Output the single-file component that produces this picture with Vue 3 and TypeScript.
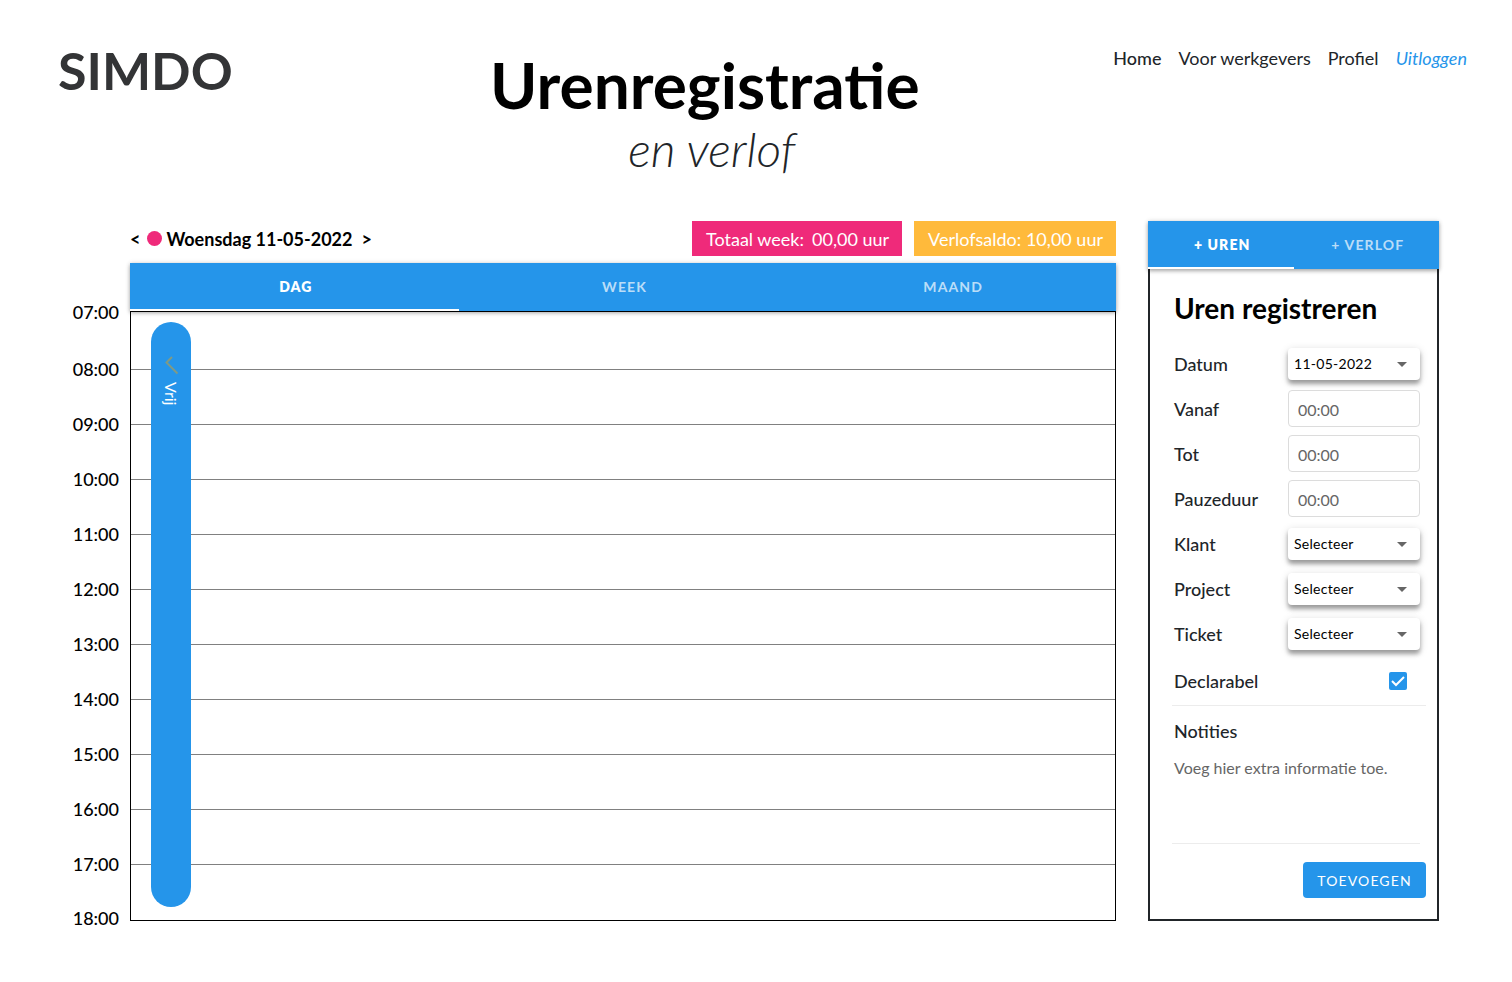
<script setup lang="ts">
import { ref } from 'vue'

interface SelectField {
  kind: 'select'
  id: string
  label: string
  value: string
}
interface TimeField {
  kind: 'time'
  id: string
  label: string
  value: string
}
type Field = SelectField | TimeField

const hours: string[] = Array.from({ length: 12 }, (_, i) => `${String(i + 7).padStart(2, '0')}:00`)
const views = ['DAG', 'WEEK', 'MAAND'] as const
const activeView = ref<string>('DAG')

const forms = ['+ UREN', '+ VERLOF'] as const
const activeForm = ref<string>('+ UREN')

const fields = ref<Field[]>([
  { kind: 'select', id: 'datum', label: 'Datum', value: '11-05-2022' },
  { kind: 'time', id: 'vanaf', label: 'Vanaf', value: '' },
  { kind: 'time', id: 'tot', label: 'Tot', value: '' },
  { kind: 'time', id: 'pauzeduur', label: 'Pauzeduur', value: '' },
  { kind: 'select', id: 'klant', label: 'Klant', value: 'Selecteer' },
  { kind: 'select', id: 'project', label: 'Project', value: 'Selecteer' },
  { kind: 'select', id: 'ticket', label: 'Ticket', value: 'Selecteer' },
])
const billable = ref(true)
const notes = ref('')
</script>

<template>
  <div class="page">
    <header class="header">
      <div class="logo">SIMDO</div>
      <div class="heading">
        <h1>Urenregistratie</h1>
        <p>en verlof</p>
      </div>
      <nav class="nav">
        <a href="#home" class="current">Home</a>
        <a href="#werkgevers">Voor werkgevers</a>
        <a href="#profiel">Profiel</a>
        <a href="#uitloggen" class="logout">Uitloggen</a>
      </nav>
    </header>

    <main class="main">
      <section class="agenda">
        <div class="toolbar">
          <div class="day">
            <button type="button" aria-label="Vorige dag">&lt;</button>
            <span class="dot"></span>
            <strong>Woensdag 11-05-2022</strong>
            <button type="button" class="next" aria-label="Volgende dag">&gt;</button>
          </div>
          <div class="totals">
            <div class="total pink"><span>Totaal week:</span><span>00,00 uur</span></div>
            <div class="total amber">Verlofsaldo: 10,00 uur</div>
          </div>
        </div>

        <ol class="hours">
          <li v-for="hour in hours" :key="hour">{{ hour }}</li>
        </ol>

        <div class="calendar">
          <div class="tabs" role="tablist">
            <button
              v-for="view in views"
              :key="view"
              type="button"
              role="tab"
              :aria-selected="activeView === view"
              :class="{ active: activeView === view }"
              @click="activeView = view"
            >{{ view }}</button>
          </div>
          <div class="slots">
            <div v-for="hour in hours.slice(1)" :key="hour" class="slot"></div>
            <div class="event">
              <svg width="16" height="20" viewBox="0 0 16 20" fill="none" aria-hidden="true">
                <path d="M9 2 L3.5 7.5 L14.5 18.5" stroke="#7f9a85" stroke-width="2" />
              </svg>
              <span>Vrij</span>
            </div>
          </div>
        </div>
      </section>

      <aside class="panel">
        <div class="tabs" role="tablist">
          <button
            v-for="form in forms"
            :key="form"
            type="button"
            role="tab"
            :aria-selected="activeForm === form"
            :class="{ active: activeForm === form }"
            @click="activeForm = form"
          >{{ form }}</button>
        </div>
        <form class="form" @submit.prevent>
          <h2>Uren registreren</h2>
          <div v-for="field in fields" :key="field.id" class="field">
            <label :for="field.id">{{ field.label }}</label>
            <div v-if="field.kind === 'select'" class="select">
              <select :id="field.id" v-model="field.value">
                <option>{{ field.value }}</option>
              </select>
              <svg width="10" height="5" viewBox="0 0 10 5" aria-hidden="true">
                <path d="M0 0 H10 L5 5 Z" fill="#666" />
              </svg>
            </div>
            <input v-else :id="field.id" v-model="field.value" type="text" placeholder="00:00" />
          </div>
          <div class="field check">
            <label for="declarabel">Declarabel</label>
            <span class="box">
              <input id="declarabel" v-model="billable" type="checkbox" />
              <svg v-if="billable" width="18" height="18" viewBox="0 0 18 18" fill="none" aria-hidden="true">
                <path d="M3 9 L7 13 L15 5" stroke="#fff" stroke-width="2" />
              </svg>
            </span>
          </div>
          <div class="notes">
            <label for="notities">Notities</label>
            <textarea id="notities" v-model="notes" placeholder="Voeg hier extra informatie toe."></textarea>
          </div>
          <button type="submit" class="submit">TOEVOEGEN</button>
        </form>
      </aside>
    </main>
  </div>
</template>

<style>
body {
  margin: 0;
  background: #fff;
}
</style>

<style scoped>
.page,
.page * {
  box-sizing: border-box;
}
.page {
  font-family: Lato, "Liberation Sans", sans-serif;
  font-size: 18px;
  line-height: 24px;
  color: #212529;
  padding-bottom: 60px;
}
button,
input,
select,
textarea {
  font-family: inherit;
  margin: 0;
}
button {
  border: 0;
  padding: 0;
  background: none;
  color: inherit;
  cursor: pointer;
}

.header {
  display: grid;
  grid-template-columns: 15fr auto 19fr;
  align-items: start;
  padding: 38px 45px 40px 58px;
}
.logo {
  font-size: 52px;
  line-height: 64px;
  font-weight: 700;
  color: #333436;
}
.heading {
  padding-top: 15px;
  text-align: center;
}
.heading h1 {
  margin: 0;
  font-size: 64px;
  line-height: 64px;
  font-weight: 700;
  color: #000;
}
.heading p {
  margin: 0;
  padding-left: 14px;
  font-size: 48px;
  line-height: 64px;
  font-weight: 300;
  font-style: italic;
}
.nav {
  display: flex;
  justify-content: flex-end;
  gap: 17px;
  padding-top: 8px;
  white-space: nowrap;
}
.nav a {
  color: #212529;
  text-decoration: none;
}
.nav .current {
  font-weight: 500;
}
.nav .logout {
  color: #2595ea;
  font-style: italic;
}

.main {
  display: grid;
  grid-template-columns: minmax(0, 1fr) 291px;
  gap: 32px;
  padding: 0 73px 0 70px;
}
.agenda {
  display: grid;
  grid-template-columns: 60px minmax(0, 1fr);
  grid-template-rows: 35px auto;
  row-gap: 7px;
}
.toolbar {
  grid-column: 2;
  display: flex;
  justify-content: space-between;
}
.day {
  display: flex;
  align-items: center;
  color: #000;
}
.day button {
  font-size: 18px;
  font-weight: 700;
}
.day .next {
  margin-left: 9px;
}
.dot {
  width: 15px;
  height: 15px;
  margin: 0 4px 0 7px;
  border-radius: 50%;
  background: #ef2a7a;
}
.day strong {
  font-weight: 700;
}
.totals {
  display: flex;
  gap: 12px;
}
.total {
  display: flex;
  align-items: center;
  gap: 8px;
  padding: 0 13px 0 14px;
  color: #fff;
}
.pink {
  background: #ef2a7a;
}
.amber {
  background: #ffba3b;
}
.hours {
  list-style: none;
  margin: 0;
  padding: 19px 11px 0 0;
  text-align: right;
  font-weight: 500;
  color: #000;
}
.hours li {
  line-height: 55px;
}
.hours li:first-child {
  line-height: 60px;
}
.hours li:last-child {
  height: 28px;
  line-height: 52px;
}
.calendar {
  align-self: start;
}
.tabs {
  display: flex;
  height: 48px;
  background: #2595ea;
  box-shadow: 0 2px 4px rgba(0, 0, 0, 0.3), 0 0 5px rgba(0, 0, 0, 0.12);
}
.tabs button {
  flex: 1;
  padding-left: 3px;
  border-top: 1px solid transparent;
  border-bottom: 2px solid transparent;
  font-size: 14px;
  font-weight: 700;
  letter-spacing: 0.08em;
  color: rgba(255, 255, 255, 0.7);
}
.tabs .active {
  border-bottom-color: #fff;
  font-weight: 800;
  color: #fff;
}
.slots {
  position: relative;
  border: 1px solid #000;
}
.slot {
  height: 55px;
  border-bottom: 1px solid #808080;
}
.slot:first-child {
  height: 58px;
}
.slot:nth-child(11) {
  border-bottom: 0;
}
.event {
  position: absolute;
  top: 10px;
  bottom: 13px;
  left: 20px;
  width: 40px;
  padding-top: 33px;
  border-radius: 20px;
  background: #2595ea;
  color: #fff;
  display: flex;
  flex-direction: column;
  align-items: center;
  gap: 7px;
  font-size: 16px;
}
.event span {
  writing-mode: vertical-rl;
}

.panel {
  display: flex;
  flex-direction: column;
}
.panel .tabs {
  position: relative;
}
.form {
  flex: 1;
  display: flex;
  flex-direction: column;
  padding: 23px 11px 21px 22px;
  border: 2px solid #212529;
  border-top: 0;
}
.form h2 {
  margin: 0 0 17px 2px;
  font-size: 28px;
  line-height: 32px;
  font-weight: 700;
  color: #000;
}
.field {
  display: flex;
  align-items: center;
  justify-content: space-between;
  height: 45px;
  padding: 0 6px 0 2px;
}
.field label,
.notes label {
  font-weight: 500;
}
.field input[type='text'] {
  width: 132px;
  height: 37px;
  padding: 2px 9px 0;
  border: 1px solid #dcdcdc;
  border-radius: 4px;
  font-size: 16px;
  color: #212529;
  background: #fff;
}
input::placeholder,
textarea::placeholder {
  color: #666;
  opacity: 1;
}
.select {
  position: relative;
  width: 132px;
}
.select select {
  display: block;
  appearance: none;
  width: 100%;
  height: 32px;
  padding: 0 24px 0 6px;
  border: 0;
  border-radius: 4px;
  background: #fff;
  box-shadow: 0 4px 4px rgba(0, 0, 0, 0.32), 0 2px 8px rgba(0, 0, 0, 0.16);
  font-size: 14px;
  letter-spacing: 0.02em;
  color: #000;
}
.select svg {
  position: absolute;
  right: 13px;
  top: 14px;
  pointer-events: none;
}
.check {
  height: 50px;
  padding-right: 19px;
  border-bottom: 1px solid #ececec;
}
.box {
  position: relative;
  width: 18px;
  height: 18px;
}
.box input {
  display: block;
  appearance: none;
  width: 18px;
  height: 18px;
  border: 2px solid #2595ea;
  border-radius: 2px;
}
.box input:checked {
  background: #2595ea;
}
.box svg {
  position: absolute;
  inset: 0;
  pointer-events: none;
}
.notes {
  display: flex;
  flex-direction: column;
  margin-right: 6px;
  padding-top: 13px;
  border-bottom: 1px solid #ececec;
}
.notes label {
  padding-left: 2px;
}
.notes textarea {
  height: 87px;
  margin-top: 13px;
  padding: 0 2px;
  border: 0;
  resize: none;
  font-size: 16px;
  line-height: 24px;
  color: #212529;
  background: none;
}
.submit {
  align-self: flex-end;
  margin-top: 18px;
  width: 123px;
  height: 36px;
  border-radius: 4px;
  background: #2595ea;
  color: #fff;
  font-size: 14px;
  letter-spacing: 0.08em;
}
</style>
